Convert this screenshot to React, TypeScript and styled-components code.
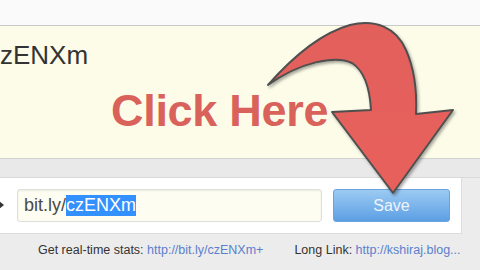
import React from 'react';
import styled, { createGlobalStyle } from 'styled-components';

const GlobalStyle = createGlobalStyle`
  html, body {
    margin: 0;
    padding: 0;
    width: 480px;
    height: 270px;
    overflow: hidden;
    background: #ececec;
    font-family: 'Liberation Sans', Arial, sans-serif;
  }
`;

const Page = styled.div`
  position: relative;
  width: 480px;
  height: 270px;
  overflow: hidden;
  display: flex;
  flex-direction: column;
`;

const TopBar = styled.div`
  height: 25px;
  background: #fafafa;
  border-bottom: 1px solid #c9c9c9;
  box-shadow: 0 1px 2px rgba(0, 0, 0, 0.06);
`;

const ResultPanel = styled.div`
  height: 132px;
  background: #fcfce9;
  border-bottom: 1px solid #d2d2d2;
  display: flex;
  flex-direction: column;
`;

const ShortCode = styled.div`
  margin: 15px 0 0 -13px;
  font-size: 26px;
  line-height: 29px;
  color: #333;
`;

const Callout = styled.div`
  margin: 19px 0 0 111px;
  font-size: 45px;
  line-height: 44px;
  font-weight: bold;
  color: #d9625b;
  letter-spacing: -0.3px;
`;

const Gap = styled.div`
  height: 18px;
  background: #e9e9e9;
  border-bottom: 1px solid #dadada;
`;

const ActionRow = styled.div`
  margin-left: -10px;
  width: 471px;
  height: 55px;
  background: #fff;
  border-right: 1px solid #dcdcdc;
  border-bottom: 1px solid #dcdcdc;
  display: flex;
  align-items: center;
`;

const Caret = styled.span`
  width: 0;
  height: 0;
  margin: -2px 0 0 8px;
  border-top: 5px solid transparent;
  border-bottom: 5px solid transparent;
  border-left: 6px solid #333;
`;

const LinkField = styled.div`
  margin-left: 13px;
  width: 297px;
  height: 31px;
  padding-left: 6px;
  background: #fdfdf1;
  border: 1px solid #dedede;
  border-radius: 3px;
  box-shadow: inset 0 1px 2px rgba(0, 0, 0, 0.08);
  display: flex;
  align-items: center;
  font-size: 18px;
  color: #4a4a4a;
`;

const Selected = styled.span`
  background: #3390ff;
  color: #fff;
  line-height: 21px;
`;

const SaveButton = styled.button`
  margin-left: 11px;
  width: 117px;
  height: 33px;
  border: 1px solid #6aa3dc;
  border-radius: 3px;
  background: linear-gradient(#9ccbf3, #5c9fe4);
  color: #eef4fb;
  font-family: 'Liberation Sans', Arial, sans-serif;
  font-size: 16px;
  padding: 0;
`;

const Footer = styled.div`
  display: flex;
  padding: 9px 0 0 38px;
  font-size: 12.5px;
  color: #333;
`;

const FooterItem = styled.span<{ $gap?: number }>`
  margin-left: ${(p) => p.$gap ?? 0}px;
  white-space: nowrap;
`;

const FooterLink = styled.span`
  color: #5b7fcc;
`;

const ArrowLayer = styled.svg`
  position: absolute;
  left: 0;
  top: 0;
  pointer-events: none;
`;

const CurvedArrow = () => (
  <ArrowLayer width={480} height={270} viewBox="0 0 480 270">
    <defs>
      <linearGradient id="arrowFill" x1="0" y1="0" x2="0" y2="1">
        <stop offset="0" stopColor="#e2615c" />
        <stop offset="1" stopColor="#e8615b" />
      </linearGradient>
      <filter id="arrowShadow" x="-10%" y="-10%" width="130%" height="130%">
        <feDropShadow dx="1.5" dy="2" stdDeviation="1.5" floodColor="#000" floodOpacity="0.35" />
      </filter>
    </defs>
    <path
      d="M268,85 C290,60 318,34 350,25 C375,19 396,27 406,50 C414,68 417,92 416,114 L453,110 L393,193 L332,112 L371,110 C370,92 366,72 352,63 C335,55 300,62 268,85 Z"
      fill="url(#arrowFill)"
      stroke="#4f4f4f"
      strokeWidth={2}
      strokeLinejoin="round"
      filter="url(#arrowShadow)"
    />
  </ArrowLayer>
);

export default function App() {
  return (
    <>
      <GlobalStyle />
      <Page>
        <TopBar />
        <ResultPanel>
          <ShortCode>czENXm</ShortCode>
          <Callout>Click Here</Callout>
        </ResultPanel>
        <Gap />
        <ActionRow>
          <Caret />
          <LinkField>
            bit.ly/<Selected>czENXm</Selected>
          </LinkField>
          <SaveButton>Save</SaveButton>
        </ActionRow>
        <Footer>
          <FooterItem>
            Get real-time stats: <FooterLink>http://bit.ly/czENXm+</FooterLink>
          </FooterItem>
          <FooterItem $gap={31}>
            Long Link: <FooterLink>http://kshiraj.blog...</FooterLink>
          </FooterItem>
        </Footer>
        <CurvedArrow />
      </Page>
    </>
  );
}
